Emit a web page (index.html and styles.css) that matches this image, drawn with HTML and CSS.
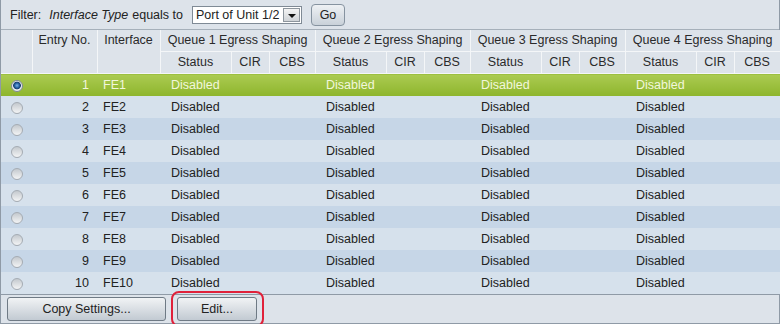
FILE: index.html
```html
<!DOCTYPE html>
<html lang="en">
<head>
    <meta charset="UTF-8">
    <title>Egress Shaping per Queue</title>
    <link rel="stylesheet" href="styles.css">
</head>
<body>
<div class="panel">
    <div class="filter">
        <span class="label">Filter:</span>
        <i>Interface Type</i> equals to
        <span class="select">Port of Unit 1/2<span class="arrow"></span></span>
        <button class="go">Go</button>
    </div>

    <table class="grid">
        <colgroup>
            <col style="width: 31px"><col style="width: 65px"><col style="width: 63px">
            <col style="width: 71px"><col style="width: 38px"><col style="width: 46px">
            <col style="width: 71px"><col style="width: 38px"><col style="width: 46px">
            <col style="width: 71px"><col style="width: 38px"><col style="width: 46px">
            <col style="width: 71px"><col style="width: 38px"><col style="width: 46px">
        </colgroup>
        <thead>
        <tr class="head-top">
            <th rowspan="2"></th>
            <th rowspan="2">Entry No.</th>
            <th rowspan="2">Interface</th>
            <th colspan="3">Queue 1 Egress Shaping</th>
            <th colspan="3">Queue 2 Egress Shaping</th>
            <th colspan="3">Queue 3 Egress Shaping</th>
            <th colspan="3">Queue 4 Egress Shaping</th>
        </tr>
        <tr class="head-sub">
            <th>Status</th><th>CIR</th><th>CBS</th>
            <th>Status</th><th>CIR</th><th>CBS</th>
            <th>Status</th><th>CIR</th><th>CBS</th>
            <th>Status</th><th>CIR</th><th>CBS</th>
        </tr>
        </thead>
        <tbody id="rows">
        <!-- rows are filled in below -->
        </tbody>
    </table>

    <div class="footer">
        <button class="btn copy">Copy Settings...</button>
        <span class="highlight"><button class="btn edit">Edit...</button></span>
    </div>
</div>

<script>
    const body = document.getElementById('rows');
    for (let i = 1; i <= 10; i++) {
        const queues = [1, 2, 3, 4].map(() =>
            '<td class="status">Disabled</td><td></td><td></td>').join('');
        body.innerHTML += `
            <tr class="${i === 1 ? 'selected' : (i % 2 ? 'odd' : 'even')}">
                <td class="pick"><span class="radio"></span></td>
                <td class="num">${i}</td>
                <td class="iface">FE${i}</td>
                ${queues}
            </tr>`;
    }
</script>
</body>
</html>
```

FILE: styles.css
```css
body {
    margin: 0;
    font-family: "Liberation Sans", Arial, sans-serif;
    font-size: 12.5px;
    color: #222;
}

.panel {
    width: 778px;
    border-left: 1px solid #8f9aa6;
    border-right: 1px solid #8f9aa6;
    background-color: #dde3ea;
}

.filter {
    height: 29px;
    display: flex;
    align-items: center;
    gap: 4px;
    padding-left: 9px;
    border-bottom: 1px solid #a6b0ba;
    color: #222;
}

.filter .label {
    margin-right: 4px;
}

.select {
    position: relative;
    display: inline-flex;
    align-items: center;
    box-sizing: border-box;
    width: 110px;
    height: 18px;
    margin-left: 5px;
    padding-left: 3px;
    background: #fff;
    border: 1px solid #7f8a95;
    font-size: 12.5px;
}

.select .arrow {
    position: absolute;
    right: 1px;
    top: 1px;
    width: 17px;
    height: 14px;
    box-sizing: border-box;
    border: 1px solid #8d959d;
    background: linear-gradient(#f4f4f4, #cfd3d7);
}

.select .arrow::after {
    content: "";
    position: absolute;
    left: 4px;
    top: 5px;
    border-left: 4px solid transparent;
    border-right: 4px solid transparent;
    border-top: 4px solid #111;
}

.go {
    margin-left: 5px;
    width: 34px;
    height: 22px;
    padding: 0;
    border: 1px solid #8693a0;
    border-radius: 4px;
    background: linear-gradient(#eef1f4, #c9d1d9);
    font-family: inherit;
    font-size: 12.5px;
    color: #222;
}

.grid {
    width: 778px;
    table-layout: fixed;
    border-collapse: collapse;
}

.grid th {
    height: 21px;
    padding: 0;
    font-weight: normal;
    vertical-align: top;
    line-height: 21px;
    text-align: center;
    color: #2a2a2a;
    background-color: #dde3ea;
    border: 1px solid #f4f6f8;
    border-top: none;
}

.grid .head-top th:first-child {
    border-left: none;
}

.grid td {
    height: 22px;
    padding: 0;
    white-space: nowrap;
}

.grid tr.even td {
    background-color: #d6e1ec;
}

.grid tr.odd td {
    background-color: #c6d6e7;
}

.grid tr.selected td {
    background: linear-gradient(#abcb52, #8db52c);
    color: #f2f7dc;
}

.grid td.num {
    text-align: right;
    padding-right: 8px;
}

.grid td.iface {
    padding-left: 6px;
}

.grid td.status {
    padding-left: 11px;
}

.grid td.pick {
    text-align: center;
}

.radio {
    display: inline-block;
    width: 12px;
    height: 12px;
    border-radius: 50%;
    box-sizing: border-box;
    border: 1px solid #a4abb3;
    background: linear-gradient(#c4c9ce, #f3f4f5);
    vertical-align: middle;
}

.selected .radio {
    border-color: #7f8993;
    background: radial-gradient(circle at 50% 45%, #7ab2e8 0, #1f5a9c 2.5px, #1a3f6d 3.5px, #e8ecef 4.2px);
}

.footer {
    height: 28px;
    display: flex;
    align-items: center;
    gap: 11px;
    padding-left: 6px;
    border-top: 1px solid #8f9aa6;
    border-bottom: 1px solid #8f9aa6;
}

.btn {
    height: 24px;
    padding: 0;
    border: 1px solid #6f7a85;
    border-radius: 3px;
    background: linear-gradient(#f1f3f5, #c2cad2);
    font-family: inherit;
    font-size: 12.5px;
    color: #222;
}

.copy {
    width: 159px;
}

.edit {
    width: 80px;
}

.highlight {
    position: relative;
    display: inline-block;
    height: 24px;
}

.highlight::after {
    content: "";
    position: absolute;
    left: -6px;
    top: -6px;
    right: -7px;
    bottom: -6px;
    border: 2px solid #e0213a;
    border-radius: 8px;
}
```
